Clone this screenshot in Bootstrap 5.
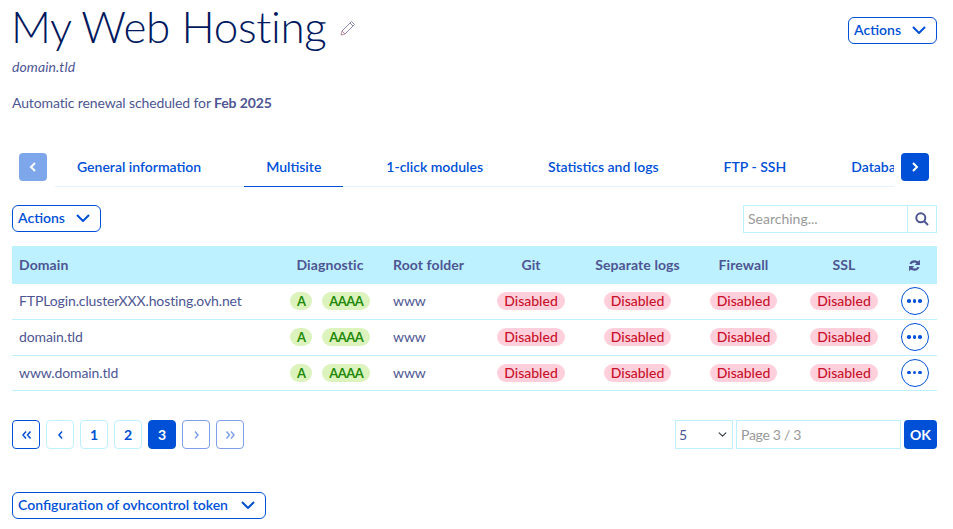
<!DOCTYPE html>
<html lang="en">
<head>
    <meta charset="UTF-8">
    <title>My Web Hosting</title>
    <link href="https://cdn.jsdelivr.net/npm/bootstrap@5.3.0/dist/css/bootstrap.min.css" rel="stylesheet">
    <style>
        body { font-family: Lato, "Noto Sans", sans-serif; font-size: 14px; color: #4d5693; background: #fff; overflow: hidden; letter-spacing: -.12px; }
        .page-wrap { padding: 0 16px 0 12px; height: 529px; }
        .page-title { font-size: 44px; font-weight: 300; line-height: 53px; padding-bottom: 3px; color: #00185e; margin: 0 0 0 -1px; letter-spacing: -.35px; }
        .pencil-icon { margin-left: 14px; }
        .head-row { height: 56px; }
        .head-row .act-btn { margin-top: 5px; }
        .sub-domain { line-height: 20px; margin-top: 1px; letter-spacing: .1px; }
        .renewal { line-height: 20px; margin-top: 16px; margin-bottom: 0; }
        .renewal strong { font-weight: 700; }
        .act-btn { --bs-btn-color: #0050d7; --bs-btn-border-color: #0050d7; --bs-btn-hover-color: #0050d7; --bs-btn-hover-bg: #bef1ff; --bs-btn-hover-border-color: #0050d7; font-weight: 600; font-size: 14px; line-height: 18px; padding: 3px 5px 4px; border-radius: 6px; display: inline-flex; align-items: center; letter-spacing: 0; }
        .act-btn svg { margin-left: 11px; margin-right: 5px; }
        .bottom-row .act-btn svg { margin-left: 13px; }
        .tabs-row { margin-top: 40px; padding: 0 8px 0 7px; height: 34px; }
        .arrow-btn { width: 28px; height: 28px; padding: 0; border-radius: 4px; background: #0050d7; border: 0; display: flex; align-items: center; justify-content: center; flex: none; }
        .arrow-btn.is-off { opacity: .5; }
        .tabs-clip { flex: 1; overflow: hidden; margin: 0 7px 0 8px; box-shadow: inset 0 -1px 0 #e5f1fb; height: 34px; }
        .tabs-list { flex-wrap: nowrap; gap: 21px; border: 0; width: 1200px; }
        .tabs-list .nav-link { color: #0050d7; font-weight: 600; font-size: 14px; line-height: 18px; padding: 5px 22px 10px; border: 0; border-bottom: 1px solid transparent; border-radius: 0; background: none; margin: 0; letter-spacing: 0; }
        .tabs-list .nav-link.active { border-bottom-color: #0050d7; color: #0050d7; background: none; }
        .tools-row { margin-top: 18px; height: 28px; }
        .search-box { width: 194px; height: 28px; }
        .search-box .form-control { border: 1px solid #bef1ff; border-radius: 0; font-size: 14px; padding: 2px 4px 4px; color: #4d5693; height: 28px; }
        .search-box .form-control::placeholder, .page-input::placeholder { color: #999; opacity: 1; }
        .search-box .btn { border: 1px solid #bef1ff; border-left: 0; border-radius: 0; width: 30px; padding: 0; display: flex; align-items: center; justify-content: center; }
        .host-table { margin: 13px 0 0; table-layout: fixed; width: 925px; color: #4d5693; --bs-table-color: #4d5693; border-collapse: separate; border-spacing: 0; }
        .host-table th { background: #bef1ff; color: #4d5693; font-weight: 700; height: 38px; padding: 0 7px 2px; vertical-align: middle; border: 0; white-space: nowrap; letter-spacing: .1px; }
        .host-table td { height: 36px; padding: 0 7px 1px; line-height: 18px; vertical-align: middle; border-bottom: 1px solid #bef1ff; color: #4d5693; white-space: nowrap; }
        .host-table tr:last-child td { height: 35px; }
        .col-dom { width: 262px; }
        .col-diag { width: 112px; }
        .col-root { width: 92px; }
        .col-git { width: 106px; }
        .col-sep { width: 107px; }
        .col-fw { width: 105px; }
        .col-ssl { width: 96px; }
        .col-end { width: 45px; }
        .pill-ok, .pill-off { border-radius: 9px; font-size: 14px; line-height: 18px; padding: 0 7px; display: inline-block; vertical-align: top; }
        .pill-ok { background: #dcf3bd; color: #1f8a0a; font-size: 13px; font-weight: 700; letter-spacing: -.6px; }
        .pill-off { background: #ffd0dc; color: #c9102a; font-weight: 500; letter-spacing: 0; }
        .pill-ok + .pill-ok { margin-left: 10px; }
        .dots-btn { width: 28px; height: 28px; border-radius: 50%; border: 1px solid #0050d7; background: #fff; padding: 0; display: inline-flex; align-items: center; justify-content: center; gap: 2px; vertical-align: top; }
        .dots-btn span { width: 3.5px; height: 3.5px; border-radius: 50%; background: #0050d7; }
        .pager-row { margin-top: 29px; height: 29px; }
        .pager { gap: 6px; margin: 0; }
        .pager .page-item .page-link { width: 28px; height: 29px; padding: 0; display: flex; align-items: center; justify-content: center; border: 1px solid #bef1ff; border-radius: 4px; color: #0050d7; font-weight: 700; font-size: 14px; background: #fff; margin: 0; }
        .pager .page-item.is-main .page-link { border-color: #0050d7; }
        .pager .page-item.active .page-link { background: #0050d7; border-color: #0050d7; color: #fff; }
        .pager .page-item.disabled .page-link { border-color: #809fea; color: #809fea; }
        .size-tools { gap: 3px; }
        .size-select { width: 58px; height: 29px; border: 1px solid #bef1ff; border-radius: 0; font-size: 14px; color: #4d5693; padding: 0 3px; background-position: right 4px center; background-size: 11px 9px; }
        .page-input { width: 165px; height: 29px; border: 1px solid #bef1ff; border-radius: 0; font-size: 14px; padding: 0 4px; letter-spacing: -.3px; }
        .ok-btn { width: 33px; height: 29px; padding: 0; border-radius: 4px; background: #0050d7; border: 0; color: #fff; font-weight: 700; font-size: 14px; }
        .bottom-row { margin-top: 43px; }
    </style>
</head>
<body>
<div class="page-wrap">
    <div class="head-row d-flex justify-content-between align-items-center">
        <div class="d-flex align-items-center">
            <h1 class="page-title">My Web Hosting</h1>
            <svg class="pencil-icon" width="16" height="16" viewBox="0 0 16 16" fill="none" stroke="#8a8fb5" stroke-width="1"><path d="M2 11L11.5 1.5l3 3L5 14"/><path d="M10 3l3 3"/><path d="M5 14l-4 1 1-4z" stroke="#c08a9c"/></svg>
        </div>
        <button type="button" class="btn act-btn">Actions
            <svg width="14" height="8" viewBox="0 0 14 8" fill="none" stroke="#0050d7" stroke-width="2"><path d="M1 1l6 6 6-6"/></svg>
        </button>
    </div>
    <div class="sub-domain fst-italic">domain.tld</div>
    <p class="renewal">Automatic renewal scheduled for <strong>Feb 2025</strong></p>

    <div class="tabs-row d-flex align-items-start">
        <button type="button" class="arrow-btn is-off" aria-label="Previous">
            <svg width="8" height="10" viewBox="0 0 8 10" fill="none" stroke="#fff" stroke-width="2"><path d="M6 1L2 5l4 4"/></svg>
        </button>
        <div class="tabs-clip">
            <ul class="nav nav-tabs tabs-list">
                <li class="nav-item"><a class="nav-link" href="#">General information</a></li>
                <li class="nav-item"><a class="nav-link active" href="#">Multisite</a></li>
                <li class="nav-item"><a class="nav-link" href="#">1-click modules</a></li>
                <li class="nav-item"><a class="nav-link" href="#">Statistics and logs</a></li>
                <li class="nav-item"><a class="nav-link" href="#">FTP - SSH</a></li>
                <li class="nav-item"><a class="nav-link" href="#">Databases</a></li>
            </ul>
        </div>
        <button type="button" class="arrow-btn" aria-label="Next">
            <svg width="8" height="10" viewBox="0 0 8 10" fill="none" stroke="#fff" stroke-width="2"><path d="M2 1l4 4-4 4"/></svg>
        </button>
    </div>

    <div class="tools-row d-flex justify-content-between align-items-start">
        <button type="button" class="btn act-btn">Actions
            <svg width="14" height="8" viewBox="0 0 14 8" fill="none" stroke="#0050d7" stroke-width="2"><path d="M1 1l6 6 6-6"/></svg>
        </button>
        <div class="input-group search-box flex-nowrap">
            <input type="text" class="form-control shadow-none" placeholder="Searching...">
            <button type="button" class="btn" aria-label="Search">
                <svg width="14" height="14" viewBox="0 0 14 14" fill="none" stroke="#4d5693" stroke-width="2"><circle cx="5.8" cy="5.8" r="4.5"/><path d="M9 9l4 4"/></svg>
            </button>
        </div>
    </div>

    <table class="table host-table">
        <colgroup>
            <col class="col-dom"><col class="col-diag"><col class="col-root"><col class="col-git"><col class="col-sep"><col class="col-fw"><col class="col-ssl"><col class="col-end">
        </colgroup>
        <thead>
            <tr>
                <th>Domain</th>
                <th class="text-center">Diagnostic</th>
                <th>Root folder</th>
                <th class="text-center">Git</th>
                <th class="text-center">Separate logs</th>
                <th class="text-center">Firewall</th>
                <th class="text-center">SSL</th>
                <th class="text-center">
                    <svg width="13" height="13" viewBox="0 0 24 24" fill="#4d5693"><path d="M19.5 8.5A8.5 8.5 0 0 0 4.5 9" fill="none" stroke="#4d5693" stroke-width="4"/><path d="M22 1.5V11h-9.5z"/><path d="M4.5 15.5A8.5 8.5 0 0 0 19.5 15" fill="none" stroke="#4d5693" stroke-width="4"/><path d="M2 22.5V13h9.5z"/></svg>
                </th>
            </tr>
        </thead>
        <tbody>
            <tr>
                <td>FTPLogin.clusterXXX.hosting.ovh.net</td>
                <td class="text-center"><span class="pill-ok">A</span><span class="pill-ok">AAAA</span></td>
                <td>www</td>
                <td class="text-center"><span class="pill-off">Disabled</span></td>
                <td class="text-center"><span class="pill-off">Disabled</span></td>
                <td class="text-center"><span class="pill-off">Disabled</span></td>
                <td class="text-center"><span class="pill-off">Disabled</span></td>
                <td class="text-center"><button type="button" class="dots-btn" aria-label="More"><span></span><span></span><span></span></button></td>
            </tr>
            <tr>
                <td>domain.tld</td>
                <td class="text-center"><span class="pill-ok">A</span><span class="pill-ok">AAAA</span></td>
                <td>www</td>
                <td class="text-center"><span class="pill-off">Disabled</span></td>
                <td class="text-center"><span class="pill-off">Disabled</span></td>
                <td class="text-center"><span class="pill-off">Disabled</span></td>
                <td class="text-center"><span class="pill-off">Disabled</span></td>
                <td class="text-center"><button type="button" class="dots-btn" aria-label="More"><span></span><span></span><span></span></button></td>
            </tr>
            <tr>
                <td>www.domain.tld</td>
                <td class="text-center"><span class="pill-ok">A</span><span class="pill-ok">AAAA</span></td>
                <td>www</td>
                <td class="text-center"><span class="pill-off">Disabled</span></td>
                <td class="text-center"><span class="pill-off">Disabled</span></td>
                <td class="text-center"><span class="pill-off">Disabled</span></td>
                <td class="text-center"><span class="pill-off">Disabled</span></td>
                <td class="text-center"><button type="button" class="dots-btn" aria-label="More"><span></span><span></span><span></span></button></td>
            </tr>
        </tbody>
    </table>

    <div class="pager-row d-flex justify-content-between align-items-center">
        <ul class="pagination pager">
            <li class="page-item is-main"><a class="page-link" href="#" aria-label="First"><svg width="11" height="10" viewBox="0 0 11 10" fill="none" stroke="currentColor" stroke-width="1.5"><path d="M5 1.5L2 5l3 3.5M9.5 1.5L6.5 5l3 3.5"/></svg></a></li>
            <li class="page-item"><a class="page-link" href="#" aria-label="Previous"><svg width="7" height="10" viewBox="0 0 7 10" fill="none" stroke="currentColor" stroke-width="1.5"><path d="M5 1.5L2 5l3 3.5"/></svg></a></li>
            <li class="page-item"><a class="page-link" href="#">1</a></li>
            <li class="page-item"><a class="page-link" href="#">2</a></li>
            <li class="page-item active"><a class="page-link" href="#">3</a></li>
            <li class="page-item disabled"><a class="page-link" href="#" aria-label="Next"><svg width="7" height="10" viewBox="0 0 7 10" fill="none" stroke="currentColor" stroke-width="1.5"><path d="M2 1.5L5 5 2 8.5"/></svg></a></li>
            <li class="page-item disabled"><a class="page-link" href="#" aria-label="Last"><svg width="11" height="10" viewBox="0 0 11 10" fill="none" stroke="currentColor" stroke-width="1.5"><path d="M1.5 1.5L4.5 5l-3 3.5M6 1.5L9 5 6 8.5"/></svg></a></li>
        </ul>
        <div class="d-flex size-tools align-items-center">
            <select class="form-select size-select shadow-none"><option>5</option></select>
            <input type="text" class="form-control page-input shadow-none" placeholder="Page 3 / 3">
            <button type="button" class="btn ok-btn">OK</button>
        </div>
    </div>

    <div class="bottom-row">
        <button type="button" class="btn act-btn">Configuration of ovhcontrol token
            <svg width="14" height="8" viewBox="0 0 14 8" fill="none" stroke="#0050d7" stroke-width="2"><path d="M1 1l6 6 6-6"/></svg>
        </button>
    </div>
</div>
</body>
</html>
